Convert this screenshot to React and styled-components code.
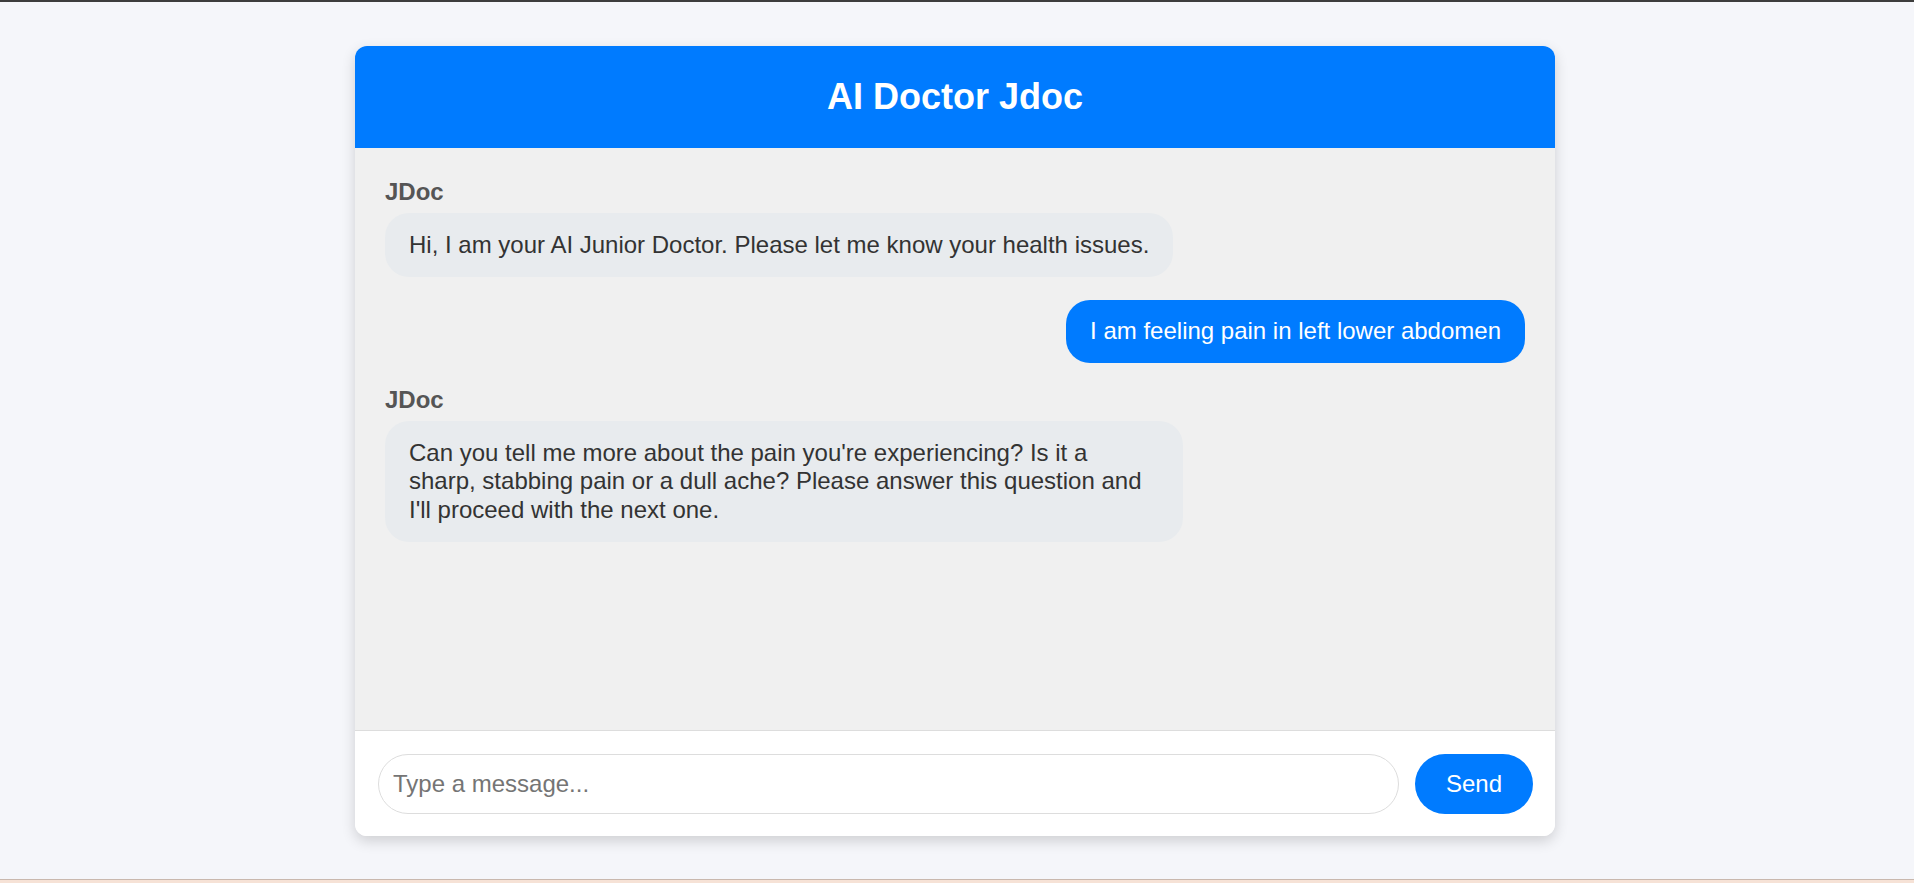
import React from "react";
import styled, { createGlobalStyle } from "styled-components";

const GlobalStyle = createGlobalStyle`
  * { box-sizing: border-box; }
  html, body { margin: 0; padding: 0; height: 100%; }
  body {
    font-family: "Liberation Sans", Arial, sans-serif;
    background: #f5f6fa;
    overflow: hidden;
  }
  #root { height: 100%; }
`;

const Page = styled.div`
  height: 100vh;
  display: flex;
  flex-direction: column;
  border-top: 2px solid #3d3d3d;
`;

const Main = styled.main`
  flex: 1;
  display: flex;
  justify-content: center;
  align-items: flex-start;
  padding: 44px 4px 0 0;
`;

const BottomStrip = styled.div`
  height: 4px;
  border-top: 1px solid #c9b8ae;
  background: #f6e2d6;
`;

const Card = styled.section`
  width: 1200px;
  height: 790px;
  display: flex;
  flex-direction: column;
  background: #ffffff;
  border-radius: 12px;
  overflow: hidden;
  box-shadow: 0 5px 14px rgba(0, 0, 0, 0.16);
`;

const Header = styled.header`
  background: #007bff;
  padding: 30px;
  text-align: center;
`;

const Title = styled.h1`
  margin: 0;
  color: #ffffff;
  font-size: 36px;
  font-weight: 700;
`;

const ChatArea = styled.div`
  flex: 1;
  background: #f0f0f0;
  padding: 30px;
  display: flex;
  flex-direction: column;
  gap: 23px;
  overflow-y: auto;
`;

const Message = styled.div`
  display: flex;
  flex-direction: column;
  align-items: ${(p) => (p.$user ? "flex-end" : "flex-start")};
`;

const Sender = styled.div`
  font-size: 24px;
  font-weight: 700;
  color: #555555;
  margin-bottom: 7px;
`;

const Bubble = styled.div`
  max-width: 70%;
  padding: 17.5px 24px;
  border-radius: 24px;
  font-size: 24px;
  line-height: 28.5px;
  background: ${(p) => (p.$user ? "#007bff" : "#e8ebee")};
  color: ${(p) => (p.$user ? "#ffffff" : "#333333")};
`;

const InputBar = styled.form`
  display: flex;
  align-items: center;
  gap: 16px;
  padding: 23px 22px 22px 23px;
  border-top: 1px solid #dddddd;
  background: #ffffff;
`;

const TextInput = styled.input`
  flex: 1;
  font-family: "Liberation Sans", Arial, sans-serif;
  font-size: 24px;
  padding: 15px 14px;
  border: 1px solid #dddddd;
  border-radius: 30px;
  outline: none;
  color: #333333;
  &::placeholder { color: #757575; }
`;

const SendButton = styled.button`
  font-family: "Liberation Sans", Arial, sans-serif;
  font-size: 24px;
  padding: 16px 31px;
  border: none;
  border-radius: 30px;
  background: #007bff;
  color: #ffffff;
  cursor: pointer;
`;

const messages = [
  { user: false, text: "Hi, I am your AI Junior Doctor. Please let me know your health issues." },
  { user: true, text: "I am feeling pain in left lower abdomen" },
  {
    user: false,
    text: "Can you tell me more about the pain you're experiencing? Is it a sharp, stabbing pain or a dull ache? Please answer this question and I'll proceed with the next one.",
  },
];

export default function App() {
  return (
    <>
      <GlobalStyle />
      <Page>
        <Main>
          <Card>
            <Header>
              <Title>AI Doctor Jdoc</Title>
            </Header>
            <ChatArea>
              {messages.map((m, i) => (
                <Message key={i} $user={m.user}>
                  {!m.user && <Sender>JDoc</Sender>}
                  <Bubble $user={m.user}>{m.text}</Bubble>
                </Message>
              ))}
            </ChatArea>
            <InputBar onSubmit={(e) => e.preventDefault()}>
              <TextInput type="text" placeholder="Type a message..." />
              <SendButton type="submit">Send</SendButton>
            </InputBar>
          </Card>
        </Main>
        <BottomStrip />
      </Page>
    </>
  );
}
